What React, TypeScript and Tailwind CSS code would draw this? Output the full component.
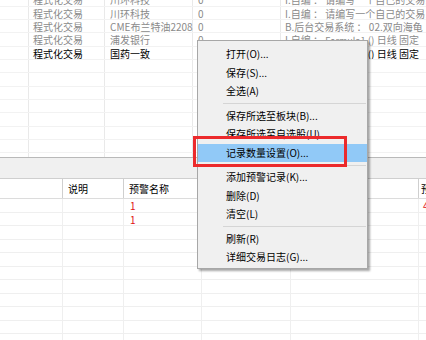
import React from "react";

const S = ({ children }: { children: React.ReactNode }) => <span className="text-[9px]">{children}</span>;

const topRows: { a: string; b: string; c: string; d: React.ReactNode; gray: boolean }[] = [
  { a: "程式化交易", b: "川环科技", c: "0", d: "I.自编 ： 请编写一个自己的交易系统", gray: true },
  { a: "程式化交易", b: "川环科技", c: "0", d: "I.自编 ： 请编写一个自己的交易系统", gray: true },
  { a: "程式化交易", b: "CME布兰特油2208", c: "0", d: "B.后台交易系统 ： 02.双向海龟", gray: true },
  { a: "程式化交易", b: "浦发银行", c: "0", d: <>I.自编 ： <S>Formula1</S> () 日线 固定</>, gray: true },
  { a: "程式化交易", b: "国药一致", c: "0", d: <>I.自编 ： <S>Formula2</S>  () 日线 固定</>, gray: false },
];

type Item = { label: string; sep?: false; active?: boolean } | { sep: true; label?: undefined; active?: undefined };

const menu: Item[] = [
  { label: "打开(O)..." },
  { label: "保存(S)..." },
  { label: "全选(A)" },
  { sep: true },
  { label: "保存所选至板块(B)..." },
  { label: "保存所选至自选股(U)..." },
  { label: "记录数量设置(O)...", active: true },
  { sep: true },
  { label: "添加预警记录(K)..." },
  { label: "删除(D)" },
  { label: "清空(L)" },
  { sep: true },
  { label: "刷新(R)" },
  { label: "详细交易日志(G)..." },
];

const bottomRows = [
  { name: "1", extra: "4" },
  { name: "1", extra: "" },
  { name: "", extra: "" },
  { name: "", extra: "" },
  { name: "", extra: "" },
  { name: "", extra: "" },
  { name: "", extra: "" },
  { name: "", extra: "" },
  { name: "", extra: "" },
  { name: "", extra: "" },
  { name: "", extra: "" },
];

export default function App() {
  const empty = Array.from({ length: 8 });
  return (
    <div className="relative w-[426px] h-[340px] overflow-hidden bg-white font-['Noto_Sans_CJK_SC','Noto_Sans',sans-serif] text-[10px]">
      {/* top table */}
      <div className="h-[157px] overflow-hidden">
        <div className="mt-[-6.67px]">
          {topRows.map((r, i) => (
            <div
              key={i}
              className={`flex h-[13.33px] border-b border-[#f2f2f2] leading-[13px] whitespace-nowrap ${
                r.gray ? "text-[#8a8a8a]" : "text-black"
              }`}
            >
              <div className="w-[29px] shrink-0 border-r border-[#e9e9e9]" />
              <div className="w-[76px] shrink-0 border-r border-[#e9e9e9] pl-[4px]">{r.a}</div>
              <div className="w-[88px] shrink-0 border-r border-[#e9e9e9] pl-[5px]">{r.b}</div>
              <div className="w-[88px] shrink-0 border-r border-[#e9e9e9] pl-[5px]">{r.c}</div>
              <div className="flex-1 pl-[4px] overflow-hidden">{r.d}</div>
            </div>
          ))}
          {empty.map((_, i) => (
            <div key={i} className="flex h-[13.33px] border-b border-[#f2f2f2]">
              <div className="w-[29px] shrink-0 border-r border-[#e9e9e9]" />
              <div className="w-[76px] shrink-0 border-r border-[#e9e9e9]" />
              <div className="w-[88px] shrink-0 border-r border-[#e9e9e9]" />
              <div className="w-[88px] shrink-0 border-r border-[#e9e9e9]" />
              <div className="flex-1" />
            </div>
          ))}
        </div>
      </div>

      {/* splitter panel */}
      <div className="h-[22px] border-t border-[#b9b9b9] border-b border-b-[#cfcfcf] bg-[#f0f0f0]" />

      {/* bottom table header */}
      <div className="flex h-[20px] border-b border-[#dcdcdc] leading-[19px] text-black whitespace-nowrap">
        <div className="w-[63px] shrink-0 border-r border-[#cfcfcf]" />
        <div className="w-[61px] shrink-0 border-r border-[#cfcfcf] pl-[5px]">说明</div>
        <div className="w-[78px] shrink-0 border-r border-[#cfcfcf] pl-[5px]">预警名称</div>
        <div className="w-[89px] shrink-0 border-r border-[#cfcfcf]" />
        <div className="w-[128px] shrink-0 border-r border-[#cfcfcf]" />
        <div className="flex-1 pl-[2px]">预警</div>
      </div>
      {bottomRows.map((r, i) => (
        <div key={i} className="flex h-[13.5px] border-b border-[#efefef] leading-[13px] text-[#e01010] whitespace-nowrap">
          <div className="w-[63px] shrink-0 border-r border-[#efefef]" />
          <div className="w-[61px] shrink-0 border-r border-[#efefef]" />
          <div className="w-[78px] shrink-0 border-r border-[#efefef] pl-[6px]">{r.name}</div>
          <div className="w-[89px] shrink-0 border-r border-[#efefef]" />
          <div className="w-[128px] shrink-0 border-r border-[#efefef]" />
          <div className="flex-1 pl-[4px]">{r.extra}</div>
        </div>
      ))}

      {/* context menu */}
      <div className="absolute left-[197px] top-[40px] w-[171px] border border-[#a7a7a7] bg-[#f0f0f0] pt-[4px] pb-[1px] shadow-[2px_2px_2px_rgba(0,0,0,0.35)] text-black whitespace-nowrap">
        {menu.map((m, i) =>
          m.sep ? (
            <div key={i} className="h-[6px] flex items-center pl-[25px] pr-[1px]">
              <div className="h-px w-full bg-[#d5d5d5]" />
            </div>
          ) : (
            <div
              key={i}
              className={`h-[18.5px] leading-[18.5px] pl-[28px] ${m.active ? "bg-[#91c9f7]" : ""}`}
            >
              {m.label}
            </div>
          )
        )}
      </div>

      {/* red highlight box */}
      <div className="absolute left-[193px] top-[136px] w-[154px] h-[31px] border-[3px] border-[#ec2a2c]" />
    </div>
  );
}
